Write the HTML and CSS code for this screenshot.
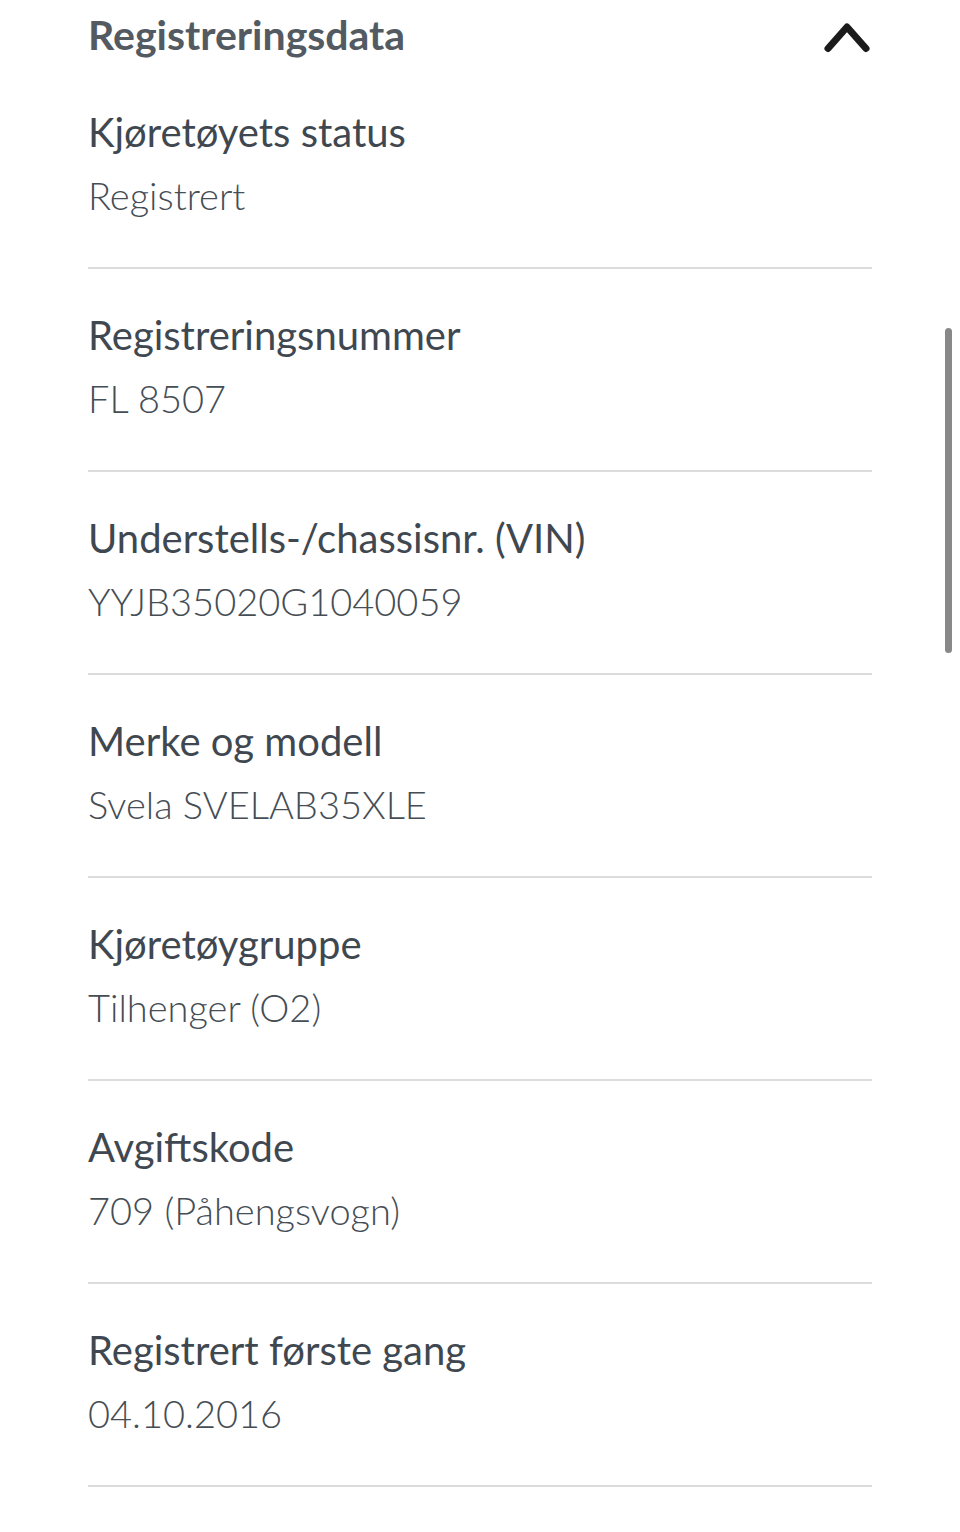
FILE: index.html
```html
<!DOCTYPE html>
<html lang="no">
<head>
    <meta charset="UTF-8">
    <meta name="viewport" content="width=device-width, initial-scale=1.0">
    <title>Registreringsdata</title>

    <link rel="stylesheet" href="styles.css">
</head>
<body>

    <div class="panel">
        <div class="panel-head">
            <h2>Registreringsdata</h2>
            <svg class="chevron" width="50" height="34" viewBox="0 0 50 34">
                <polyline points="6,28.5 25,7 44,28.5" fill="none" stroke="#1b1b1b" stroke-width="7" stroke-linecap="round" stroke-linejoin="round"/>
            </svg>
        </div>

        <dl class="fields">
            <div class="field">
                <dt>Kjøretøyets status</dt>
                <dd>Registrert</dd>
            </div>
            <div class="field">
                <dt>Registreringsnummer</dt>
                <dd>FL 8507</dd>
            </div>
            <div class="field">
                <dt>Understells-/chassisnr. (VIN)</dt>
                <dd>YYJB35020G1040059</dd>
            </div>
            <div class="field">
                <dt>Merke og modell</dt>
                <dd>Svela SVELAB35XLE</dd>
            </div>
            <div class="field">
                <dt>Kjøretøygruppe</dt>
                <dd>Tilhenger (O2)</dd>
            </div>
            <div class="field">
                <dt>Avgiftskode</dt>
                <dd>709 (Påhengsvogn)</dd>
            </div>
            <div class="field">
                <dt>Registrert første gang</dt>
                <dd>04.10.2016</dd>
            </div>
        </dl>
    </div>

    <div class="scrollbar"></div>

</body>
</html>
```

FILE: styles.css
```css
body{
    margin: 0;
    background-color: #ffffff;
    font-family: Lato, "Open Sans", sans-serif;
    color: #3f4850;
}

.panel{
    width: 784px;
    margin-left: 88px;
}

.panel-head{
    display: flex;
    justify-content: space-between;
    align-items: flex-start;
    height: 66px;
    padding-top: 4px;
    box-sizing: border-box;
}

.panel-head h2{
    margin: 0;
    font-size: 41px;
    line-height: 62px;
    font-weight: bold;
    color: #535a62;
}

.chevron{
    margin-top: 16px;
    margin-right: 0;
}

.fields{
    margin: 0;
}

.field{
    padding: 35px 0 40px 0;
    border-bottom: 2px solid #dcdcdc;
}

.field dt{
    font-size: 40px;
    line-height: 63px;
    font-weight: normal;
}

.field dd{
    margin: 0;
    font-size: 38px;
    line-height: 63px;
    font-weight: 300;
    color: #454d55;
}

.scrollbar{
    position: absolute;
    top: 328px;
    left: 945px;
    width: 7px;
    height: 325px;
    border-radius: 4px;
    background-color: #888888;
}
```
